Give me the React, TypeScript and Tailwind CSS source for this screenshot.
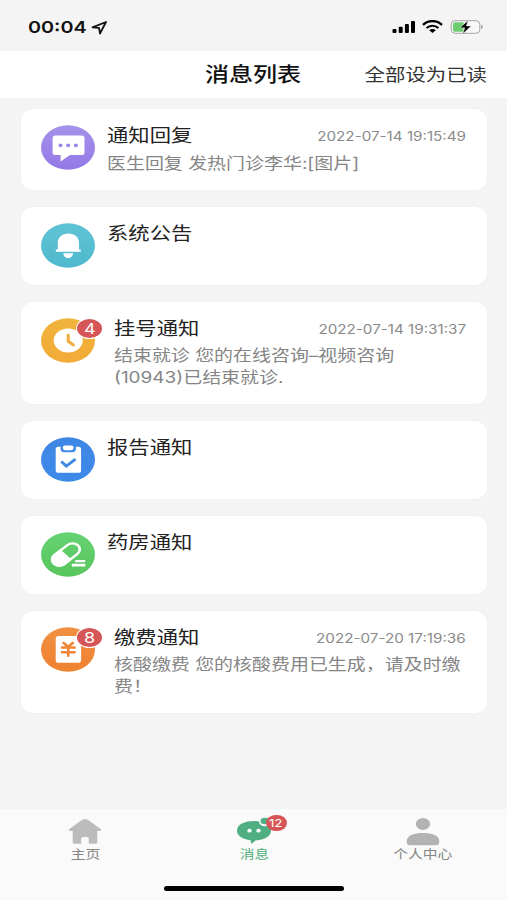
import type { ReactNode } from "react";

type Kind = "reply" | "system" | "register" | "report" | "pharmacy" | "payment";

interface Item {
  kind: Kind;
  title: string;
  date?: string;
  lines?: string[];
  badge?: number;
  height: string;
}

const items: Item[] = [
  { kind: "reply", title: "通知回复", date: "2022-07-14 19:15:49", lines: ["医生回复 发热门诊李华:[图片]"], height: "h-[81px]" },
  { kind: "system", title: "系统公告", height: "h-[78px]" },
  { kind: "register", title: "挂号通知", date: "2022-07-14 19:31:37", lines: ["结束就诊 您的在线咨询–视频咨询", "(10943)已结束就诊."], badge: 4, height: "h-[102px]" },
  { kind: "report", title: "报告通知", height: "h-[78px]" },
  { kind: "pharmacy", title: "药房通知", height: "h-[78px]" },
  { kind: "payment", title: "缴费通知", date: "2022-07-20 17:19:36", lines: ["核酸缴费 您的核酸费用已生成，请及时缴", "费！"], badge: 8, height: "h-[102px]" },
];

const gradients: Record<Kind, [string, string]> = {
  reply: ["#a492ea", "#9478e6"],
  system: ["#5fc3d6", "#50b9cd"],
  register: ["#f0b43c", "#f3aa38"],
  report: ["#3f86e4", "#3c8ae8"],
  pharmacy: ["#66d273", "#58c55c"],
  payment: ["#f19042", "#ee8230"],
};

const glyphs: Record<Kind, ReactNode> = {
  reply: (
    <>
      <path fill="#fff" d="M14.5 10.5h26q3 0 3 2.6v14.3q0 2.6-3 2.6H29l-9.4 6.5V30h-5q-3 0-3-2.6V13.1q0-2.6 2.9-2.6z" />
      <g fill="#9b85e6">
        <rect x="17.6" y="18.8" width="3.8" height="3.2" rx="1" />
        <rect x="25.3" y="18.8" width="3.8" height="3.2" rx="1" />
        <rect x="33" y="18.8" width="3.8" height="3.2" rx="1" />
      </g>
    </>
  ),
  system: (
    <g fill="#fff">
      <path d="M16.8 26.4v-6.6c0-5.4 4.5-9.3 10.6-9.3S38 14.4 38 19.8v6.6h1.7v2.3H14.8v-2.3z" />
      <path d="M22.2 30.3h10c-.5 2.9-2.3 4.6-5 4.6s-4.5-1.7-5-4.6z" />
    </g>
  ),
  register: (
    <>
      <ellipse cx="27.2" cy="22.6" rx="14.5" ry="12" fill="#fff" />
      <path d="M27.2 17v6.2l5.2 3.8" fill="none" stroke="#f0ae3b" strokeWidth="3" strokeLinecap="round" strokeLinejoin="round" />
    </>
  ),
  report: (
    <>
      <rect x="14.7" y="9.8" width="25.4" height="26" rx="2.6" fill="#fff" />
      <rect x="19.5" y="6.8" width="15.5" height="8.4" rx="4" fill="#3e87e5" />
      <rect x="21.7" y="8.4" width="11" height="4.8" rx="2.4" fill="#fff" />
      <path d="M20.3 24.5l5 4.6 9.2-7" fill="none" stroke="#3e88e6" strokeWidth="3" />
    </>
  ),
  pharmacy: (
    <>
      <g transform="translate(25 22.5) scale(1.2 1) rotate(-43)">
        <rect x="-13.5" y="-6.1" width="27" height="12.2" rx="6.1" fill="none" stroke="#fff" strokeWidth="2.2" />
        <path fill="#fff" d="M0-7.2v14.4h-7.4a7.2 7.2 0 0 1 0-14.4z" />
      </g>
      <rect x="34.2" y="28" width="10" height="2.3" rx=".5" fill="#fff" />
      <rect x="30.8" y="31.8" width="13.5" height="2.7" rx=".5" fill="#fff" />
    </>
  ),
  payment: (
    <>
      <rect x="14.7" y="9" width="25.4" height="26.7" rx="2.8" fill="#fff" />
      <path d="M21.8 15.3l5.4 4.4 5.4-4.4M20 20.5h14.6M20 25.3h14.6M27.3 19.5v10.3" fill="none" stroke="#ee8838" strokeWidth="2.6" />
    </>
  ),
};

function ItemIcon({ kind }: { kind: Kind }) {
  const [from, to] = gradients[kind];
  return (
    <svg width="54" height="45" viewBox="0 0 54 45" className="block">
      <defs>
        <linearGradient id={kind} x1="0" y1="0" x2="0" y2="1">
          <stop offset="0" stopColor={from} />
          <stop offset="1" stopColor={to} />
        </linearGradient>
      </defs>
      <ellipse cx="27" cy="22.5" rx="27" ry="22.3" fill={`url(#${kind})`} />
      {glyphs[kind]}
    </svg>
  );
}

function Card({ item }: { item: Item }) {
  return (
    <article className={`flex rounded-[13px/11px] bg-white pl-5 pr-[21px] pt-4 shadow-[0_0_2px_rgba(0,0,0,0.04)] ${item.height}`}>
      <div className="relative h-[45px] w-[54px] shrink-0">
        <ItemIcon kind={item.kind} />
        {item.badge && (
          <span className="absolute left-[35px] top-0 flex h-[21px] w-[27px] items-center justify-center rounded-[50%] border border-white bg-[#d65658] text-[15px] leading-none text-white">
            <span className="scale-x-[1.2]">{item.badge}</span>
          </span>
        )}
      </div>
      <div className={`min-w-0 flex-1 ${item.badge ? "pl-[19px]" : "pl-3"}`}>
        <div className="-mt-px flex h-6 items-center justify-between">
          <h2 className="origin-left scale-x-[1.2] whitespace-nowrap text-[17.8px] leading-6 text-[#222]">{item.title}</h2>
          {item.date && (
            <time className="origin-right scale-x-[1.2] whitespace-nowrap pt-px text-[12.7px] leading-6 text-[#8a8a8a]">{item.date}</time>
          )}
        </div>
        {item.lines && (
          <div className={item.badge ? "pt-[4px]" : "pt-[5px]"}>
            {item.lines.map((line) => (
              <p key={line} className="w-max origin-left scale-x-[1.2] whitespace-nowrap text-[15.8px] leading-[22px] text-[#858585]">
                {line}
              </p>
            ))}
          </div>
        )}
      </div>
    </article>
  );
}

function StatusBar() {
  return (
    <div className="flex h-[51px] items-start pl-[27.5px] pr-[24px] pt-[17px]">
      <span className="w-[63px] text-[16.5px] font-semibold leading-5 text-[#111]">
        <span className="inline-block origin-left scale-x-[1.2]">00:04</span>
      </span>
      <svg width="17" height="14" viewBox="0 0 17 14" className="mt-[4px]">
        <path d="M1.5 6.3L15 1 9 12.5 8 6.9z" fill="none" stroke="#111" strokeWidth="1.8" strokeLinejoin="round" />
      </svg>
      <div className="ml-auto flex items-start gap-[7px] pt-[3px]">
        <svg width="23" height="14" viewBox="0 0 23 14" fill="#000">
          <rect x="0.500" y="9" width="4" height="4" rx="1" />
          <rect x="6.700" y="6.800" width="4" height="6.200" rx="1" />
          <rect x="12.900" y="4" width="4" height="9" rx="1" />
          <rect x="19" y="1" width="4" height="12" rx="1" />
        </svg>
        <svg width="21" height="14" viewBox="0 0 21 14" fill="none" stroke="#000">
          <path d="M1 4.900C6.200-.2 14.800-.2 20 4.900" strokeWidth="2.300" />
          <path d="M4.600 8c3.300-3 8.500-3 11.800 0" strokeWidth="2.200" />
          <path d="M7.200 10.200c1.900-1.500 4.700-1.500 6.600 0L10.500 13z" fill="#000" stroke="none" />
        </svg>
        <svg width="33" height="14" viewBox="0 0 33 14">
          <rect x="1.200" y=".7" width="28.600" height="12.600" rx="3.800" fill="#f8f8f8" stroke="#a5a5a5" />
          <path d="M5.500 2.200h8v9.600h-8q-2.600 0-2.600-2.600V4.800q0-2.600 2.600-2.600z" fill="#6dcd70" />
          <path d="M31 4.800q1.800.6 1.800 2.200T31 9.200z" fill="#a5a5a5" />
          <path d="M18 .4l-7.800 7.400h4.600l-1.900 5.900 8.200-7.700h-4.800z" fill="#000" stroke="#f8f8f8" strokeWidth=".4" />
        </svg>
      </div>
    </div>
  );
}

function Tab({ label, active, children }: { label: string; active?: boolean; children: ReactNode }) {
  return (
    <div className="flex flex-col items-center pt-[5px]">
      {children}
      <span className={`mt-px scale-x-[1.2] whitespace-nowrap pl-px text-[12.3px] leading-4 ${active ? "text-[#4fae80]" : "text-[#858585]"}`}>{label}</span>
    </div>
  );
}

export default function App() {
  return (
    <div className="flex h-[900px] w-[507px] flex-col overflow-hidden bg-[#f4f4f4] font-[Inter,'Noto_Sans_CJK_SC',sans-serif]">
      <StatusBar />
      <header className="grid h-[47px] shrink-0 grid-cols-[1fr_auto_1fr] items-center bg-white pr-5">
        <h1 className="col-start-2 ml-[19px] scale-x-[1.2] whitespace-nowrap pt-px text-[20px] font-medium leading-7 text-[#111]">消息列表</h1>
        <span className="origin-right scale-x-[1.2] justify-self-end whitespace-nowrap text-[17px] leading-7 text-[#333]">全部设为已读</span>
      </header>
      <main className="flex flex-1 flex-col gap-[17px] pl-[21px] pr-5 pt-[11px]">
        {items.map((item) => (
          <Card key={item.kind} item={item} />
        ))}
      </main>
      <footer className="h-[91px] shrink-0 bg-[#fafafa]">
        <nav className="grid h-[77px] grid-cols-3">
          <Tab label="主页">
            <svg width="34" height="32" viewBox="0 0 34 32">
              <path d="M14.200 5.800q2.800-1.600 5.600 0l12.800 9.200q1.500 1.600-.8 1.900h-2.500v11.300q0 1.600-2 1.600h-6.500v-5q0-2-3.800-2t-3.800 2v5H6.700q-2 0-2-1.600V16.900H2.200q-2.300-.3-.8-1.900z" fill="#bcbcbc" />
            </svg>
          </Tab>
          <Tab label="消息" active>
            <div className="relative h-8 w-[34px]">
              <svg width="34" height="32" viewBox="0 0 34 32">
                <path d="M17 7c9.400 0 17 3.300 17 9.800 0 5.300-6.500 9.200-15.500 9.700L14.500 30l-1-3.800C5.800 25.400 0 22 0 16.800 0 10.300 7.600 7 17 7z" fill="#50af82" />
                <ellipse cx="28" cy="7.700" rx="6" ry="4.500" fill="#fafafa" />
                <ellipse cx="28" cy="7" rx="4.500" ry="3.300" fill="#50af82" />
                <ellipse cx="12.500" cy="16.700" rx="2.200" ry="1.900" fill="#fff" />
                <ellipse cx="21.500" cy="16.700" rx="2.200" ry="1.900" fill="#fff" />
              </svg>
              <span className="absolute left-[29px] top-[1px] flex h-[16px] w-[21px] items-center justify-center rounded-[10px/8px] bg-[#d65658] text-[11px] leading-none text-white">
                <span className="scale-x-[1.2]">12</span>
              </span>
            </div>
          </Tab>
          <Tab label="个人中心">
            <svg width="34" height="32" viewBox="0 0 34 32" fill="#b3b3b3">
              <ellipse cx="17" cy="10" rx="7.200" ry="6.100" />
              <path d="M.8 27c0-5.500 7-8 16.200-8s16.200 2.500 16.200 8v1.500q0 2.700-3.300 2.700H4.100q-3.300 0-3.300-2.700z" />
            </svg>
          </Tab>
        </nav>
        <div className="mx-auto h-[5px] w-[180px] rounded-full bg-black" />
      </footer>
    </div>
  );
}
